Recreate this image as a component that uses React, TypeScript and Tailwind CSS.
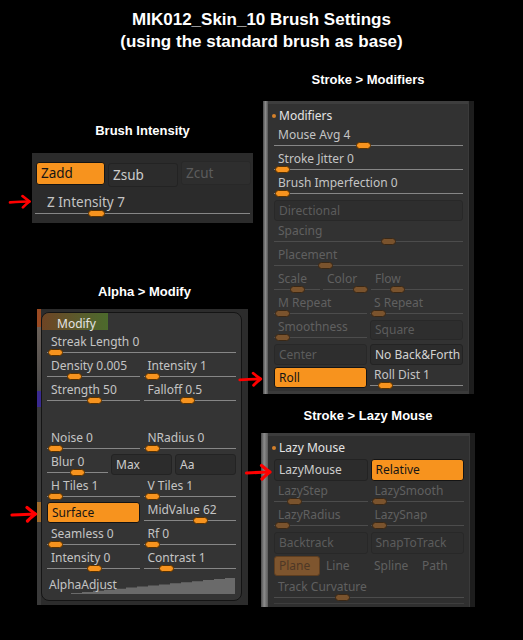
import React from 'react';

const uiFont = "font-['Noto_Sans',sans-serif]";
const titleFont = "font-['Liberation_Sans',Arial,sans-serif] font-bold text-white";

type Tone = 'orange' | 'plain' | 'dim' | 'brown';

const toneClass: Record<Tone, string> = {
  orange: 'bg-[#f7931e] border-[#141414] text-[#151515]',
  plain: 'bg-[#2c2c2c] border-[#232323] text-[#cdcdcd]',
  dim: 'bg-[#2e2e2e] border-[#282828] text-[#5c5c5c]',
  brown: 'bg-[#7e552e] border-[#5e3e20] text-[#4e3826]',
};

const Btn: React.FC<{ label: string; tone?: Tone; className?: string }> = ({
  label,
  tone = 'plain',
  className = 'h-[21px] mt-[1px]',
}) => (
  <div
    className={`border rounded-[3px] pl-[4px] flex items-center whitespace-nowrap overflow-hidden ${toneClass[tone]} ${className}`}
  >
    {label}
  </div>
);

const Slider: React.FC<{ label: string; knob: number; dim?: boolean }> = ({ label, knob, dim = false }) => (
  <div className="h-[24px]">
    <div
      className={`h-[16px] leading-[16px] pl-[4px] whitespace-nowrap ${dim ? 'text-[#606060]' : 'text-[#c4c4c4]'}`}
    >
      {label}
    </div>
    <div className="relative h-[7px] -mt-px">
      <div className={`absolute inset-x-0 top-[3px] h-px ${dim ? 'bg-[#4c4c4c]' : 'bg-[#868686]'}`} />
      <div
        className={`absolute top-0 w-[15px] h-[7px] rounded-full border ${
          dim ? 'bg-[#7a532d] border-[#3a2816]' : 'bg-[#f7931e] border-[#5a3200]'
        }`}
        style={{ left: knob }}
      />
    </div>
  </div>
);

const Arrow: React.FC<{ className: string; w?: number; h?: number }> = ({ className, w = 26, h = 16 }) => (
  <svg className={className} width={w} height={h} viewBox="0 0 28 18" fill="none">
    <path d="M2 10 C9 9.6 16 9.2 25 9" stroke="#ff0000" strokeWidth="3.2" strokeLinecap="round" />
    <path
      d="M17 2.5 C20 5 22.5 7 25.5 9 C22.5 11 20 13.5 17.5 16"
      stroke="#ff0000"
      strokeWidth="3.2"
      strokeLinecap="round"
      strokeLinejoin="round"
    />
  </svg>
);

const SectionHead: React.FC<{ label: string }> = ({ label }) => (
  <div className="h-[23px] flex items-center gap-[3px] -ml-[2px]">
    <span className="w-[4px] h-[4px] rounded-full bg-[#d4802a]" />
    <span className="text-[#e4e4e4]">{label}</span>
  </div>
);

// stepped ramp for the AlphaAdjust curve
const rampPoints = (() => {
  const pts: string[] = ['0,17'];
  for (let x = 0; x <= 175; x += 11) {
    const y = 17 - (x / 175) * 17;
    pts.push(`${x},${y.toFixed(1)}`, `${Math.min(x + 11, 175)},${y.toFixed(1)}`);
  }
  pts.push('175,0', '175,17');
  return pts.join(' ');
})();

const BrushIntensity: React.FC = () => (
  <div className="relative ml-[32px] w-[221px] h-[70px] bg-[#2b2b2b] text-[13.5px]">
    <Arrow className="absolute -left-[24px] top-[41px]" w={24} h={15} />
    <div className="flex gap-[3px] pt-[9px] pl-[4px]">
      <Btn label="Zadd" tone="orange" className="w-[69px] h-[23px]" />
      <Btn label="Zsub" tone="plain" className="w-[70px] h-[24px] mt-[1px]" />
      <Btn label="Zcut" tone="dim" className="w-[70px] h-[24px] -mt-[1px]" />
    </div>
    <div className="h-[16px] leading-[16px] pl-[15px] mt-[7px] text-[#c4c4c4]">Z Intensity 7</div>
    <div className="relative h-[7px] mx-[3px]">
      <div className="absolute inset-x-0 top-[3px] h-px bg-[#868686]" />
      <div className="absolute top-0 left-[53px] w-[17px] h-[7px] rounded-full border bg-[#f7931e] border-[#5a3200]" />
    </div>
  </div>
);

const AlphaModify: React.FC = () => (
  <div className="relative ml-[37px] w-[211px] h-[296px] bg-[#2c2c2c] flex pt-[3px] pb-[4px] pr-[6px]">
    <Arrow className="absolute -left-[27px] top-[196px]" w={28} h={18} />
    <div className="w-[4px] -mt-[3px] -mb-[4px] flex flex-col">
      <div className="h-[18px] bg-[#9a4a22]" />
      <div className="h-[64px] bg-[linear-gradient(180deg,#6a6058,#4a4a4a)]" />
      <div className="h-[16px] bg-[#3a2a90]" />
      <div className="h-[95px] bg-[#3a3a3a]" />
      <div className="h-[20px] bg-[#a06c2c]" />
      <div className="flex-1 bg-[#3a3a3a]" />
    </div>
    <div className="flex-1 rounded-[8px] border border-[#141414] bg-[#343434] overflow-hidden">
      <div className="h-[21px]">
        <div className="w-[66px] h-[17px] bg-[linear-gradient(90deg,#6e4424,#5a5a2c_55%,#4c6a2c)] pl-[15px] pt-[3px] leading-[16px] text-[#e4e4e4]">
          Modify
        </div>
      </div>
      <div className="pl-[5px] pr-[5px]">
        <Slider label="Streak Length 0" knob={1} />
        <div className="grid grid-cols-2 gap-x-[4px]">
          <Slider label="Density 0.005" knob={20} />
          <Slider label="Intensity 1" knob={1} />
          <Slider label="Strength 50" knob={40} />
          <Slider label="Falloff 0.5" knob={36} />
        </div>
        <div className="h-[24px]" />
        <div className="grid grid-cols-2 gap-x-[4px]">
          <Slider label="Noise 0" knob={1} />
          <Slider label="NRadius 0" knob={1} />
        </div>
        <div className="grid grid-cols-3 gap-x-[3px]">
          <Slider label="Blur 0" knob={23} />
          <Btn label="Max" className="h-[21px] text-[#a8a8a8]" />
          <Btn label="Aa" className="h-[21px] text-[#a8a8a8]" />
        </div>
        <div className="grid grid-cols-2 gap-x-[4px]">
          <Slider label="H Tiles 1" knob={1} />
          <Slider label="V Tiles 1" knob={1} />
          <Btn label="Surface" tone="orange" className="h-[21px]" />
          <Slider label="MidValue 62" knob={49} />
          <Slider label="Seamless 0" knob={1} />
          <Slider label="Rf 0" knob={1} />
          <Slider label="Intensity 0" knob={40} />
          <Slider label="Contrast 1" knob={15} />
        </div>
        <div className="relative h-[25px]">
          <svg className="absolute left-[13px] top-[3px]" width="175" height="17" viewBox="0 0 175 17">
            <polygon points={rampPoints} fill="#6a6a6a" />
          </svg>
          <div className="relative pt-[3px] pl-[2px] leading-[16px] text-[#c4c4c4]">AlphaAdjust</div>
        </div>
      </div>
    </div>
  </div>
);

const StrokeModifiers: React.FC = () => (
  <div className="relative ml-[2px] w-[211px] h-[293px] flex bg-[#323232]">
    <Arrow className="absolute -left-[26px] top-[270px]" w={27} h={16} />
    <div className="w-[5px] bg-[linear-gradient(90deg,#4a4a4a,#8a8a8a_50%,#555)]" />
    <div className="flex-1 flex flex-col border-t-[3px] border-[#3e3e3e] border-b-[3px] border-b-[#3a3a3a] px-[5px] pl-[6px]">
      <SectionHead label="Modifiers" />
      <Slider label="Mouse Avg 4" knob={82} />
      <Slider label="Stroke Jitter 0" knob={1} />
      <Slider label="Brush Imperfection 0" knob={1} />
      <div className="h-[24px]">
        <Btn label="Directional" tone="dim" />
      </div>
      <Slider label="Spacing" knob={107} dim />
      <Slider label="Placement" knob={44} dim />
      <div className="grid grid-cols-[46px_45px_92px] gap-x-[3px]">
        <Slider label="Scale" knob={16} dim />
        <Slider label="Color" knob={30} dim />
        <Slider label="Flow" knob={19} dim />
      </div>
      <div className="grid grid-cols-2 gap-x-[3px]">
        <Slider label="M Repeat" knob={1} dim />
        <Slider label="S Repeat" knob={1} dim />
        <Slider label="Smoothness" knob={1} dim />
        <div className="h-[24px]">
          <Btn label="Square" tone="dim" className="h-[20px] mt-[1px]" />
        </div>
        <div className="h-[24px]">
          <Btn label="Center" tone="dim" />
        </div>
        <div className="h-[24px]">
          <Btn label="No Back&Forth" tone="plain" className="h-[21px] mt-[1px] text-[#d2d2d2]" />
        </div>
        <div className="h-[24px]">
          <Btn label="Roll" tone="orange" className="h-[21px]" />
        </div>
        <Slider label="Roll Dist 1" knob={8} />
      </div>
    </div>
    <div className="w-[6px] bg-[#1d1d1d] border-l border-[#3a3a3a]" />
  </div>
);

const LazyMouse: React.FC = () => (
  <div className="relative w-[214px] h-[174px] flex bg-[#2f2f2f]">
    <Arrow className="absolute -left-[17px] top-[30px]" w={29} h={18} />
    <div className="w-[7px] bg-[linear-gradient(90deg,#4a4a4a,#8c8c8c_45%,#5a5a5a)]" />
    <div className="flex-1 flex flex-col border-t-[3px] border-[#3c3c3c] px-[5px] pl-[6px]">
      <SectionHead label="Lazy Mouse" />
      <div className="grid grid-cols-2 gap-x-[3px]">
        <div className="h-[24px]">
          <Btn label="LazyMouse" tone="plain" className="h-[22px]" />
        </div>
        <div className="h-[24px]">
          <Btn label="Relative" tone="orange" className="h-[22px]" />
        </div>
        <Slider label="LazyStep" knob={13} dim />
        <Slider label="LazySmooth" knob={1} dim />
        <Slider label="LazyRadius" knob={1} dim />
        <Slider label="LazySnap" knob={1} dim />
        <div className="h-[24px]">
          <Btn label="Backtrack" tone="dim" className="h-[22px] mt-[1px]" />
        </div>
        <div className="h-[24px]">
          <Btn label="SnapToTrack" tone="dim" className="h-[22px] mt-[1px]" />
        </div>
      </div>
      <div className="grid grid-cols-4 gap-x-[2px] h-[24px]">
        <Btn label="Plane" tone="brown" className="h-[20px] mt-[1px]" />
        <div className="pl-[4px] leading-[22px] text-[#606060]">Line</div>
        <div className="pl-[4px] leading-[22px] text-[#606060]">Spline</div>
        <div className="pl-[4px] leading-[22px] text-[#606060]">Path</div>
      </div>
      <Slider label="Track Curvature" knob={61} dim />
      <div className="flex-1 border-t border-[#3e3e3e]" />
    </div>
    <div className="w-[6px] bg-[#1d1d1d] border-l border-[#3a3a3a]" />
  </div>
);

export default function App() {
  return (
    <div className={`w-[523px] h-[640px] bg-black overflow-hidden text-[12px] ${uiFont}`}>
      <div className={`${titleFont} text-[17px] leading-[22px] text-center pt-[9px] h-[53px]`}>
        MIK012_Skin_10 Brush Settings
        <br />
        (using the standard brush as base)
      </div>
      <div className="flex">
        <div className="w-[261px]">
          <div className={`${titleFont} text-[13px] leading-[16px] text-center ml-[32px] w-[221px] mt-[70px]`}>
            Brush Intensity
          </div>
          <div className="mt-[14px]">
            <BrushIntensity />
          </div>
          <div className={`${titleFont} text-[13px] leading-[16px] text-center ml-[37px] w-[215px] mt-[61px]`}>
            Alpha &gt; Modify
          </div>
          <div className="mt-[9px]">
            <AlphaModify />
          </div>
        </div>
        <div className="w-[214px]">
          <div className={`${titleFont} text-[13px] leading-[16px] text-center mt-[19px]`}>Stroke &gt; Modifiers</div>
          <div className="mt-[13px]">
            <StrokeModifiers />
          </div>
          <div className={`${titleFont} text-[13px] leading-[16px] text-center mt-[14px]`}>
            Stroke &gt; Lazy Mouse
          </div>
          <div className="mt-[9px]">
            <LazyMouse />
          </div>
        </div>
      </div>
    </div>
  );
}
